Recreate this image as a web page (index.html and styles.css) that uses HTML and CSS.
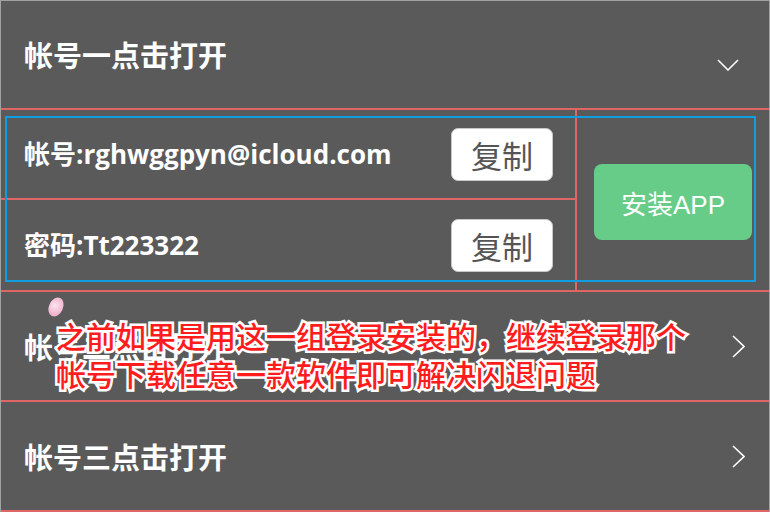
FILE: index.html
```html
<!DOCTYPE html>
<html lang="zh-CN">
<head>
<meta charset="utf-8">
<title>帐号</title>
<link rel="stylesheet" href="styles.css">
</head>
<body>
<div class="app">
  <div class="item item-open">
    <span class="item-title">帐号一点击打开</span>
    <svg class="chev-down" width="22" height="12" viewBox="0 0 22 12"><polyline points="1,1 11,11 21,1" fill="none" stroke="#fff" stroke-width="1.6"/></svg>
  </div>
  <div class="panel">
    <div class="panel-left">
      <div class="cred">
        <span class="cred-text">帐号:rghwggpyn@icloud.com</span>
        <button class="copy-btn">复制</button>
      </div>
      <div class="cred cred-last">
        <span class="cred-text">密码:Tt223322</span>
        <button class="copy-btn">复制</button>
      </div>
    </div>
    <div class="panel-right">
      <button class="install-btn">安装APP</button>
    </div>
    <div class="focus-box"></div>
  </div>
  <div class="item">
    <span class="item-title">帐号二点击打开</span>
    <svg class="chev-right" width="13" height="23" viewBox="0 0 13 23"><polyline points="1,1 12,11.5 1,22" fill="none" stroke="#fff" stroke-width="1.6"/></svg>
  </div>
  <div class="item">
    <span class="item-title">帐号三点击打开</span>
    <svg class="chev-right" width="13" height="23" viewBox="0 0 13 23"><polyline points="1,1 12,11.5 1,22" fill="none" stroke="#fff" stroke-width="1.6"/></svg>
  </div>
  <div class="note">之前如果是用这一组登录安装的，继续登录那个<br>帐号下载任意一款软件即可解决闪退问题</div>
  <div class="blob"></div>
</div>
</body>
</html>
```
FILE: styles.css
```css
* { box-sizing: border-box; }
html, body { margin: 0; padding: 0; background: #5a5a5a; }
.app {
  position: relative;
  width: 770px;
  height: 512px;
  background: #5a5a5a;
  border: 1px solid #a2a2a2;
  border-bottom: none;
  font-family: "Noto Sans CJK SC", sans-serif;
  color: #fff;
  overflow: hidden;
}
.item {
  height: 110px;
  border-bottom: 2px solid #e06666;
  display: flex;
  align-items: center;
  justify-content: space-between;
  padding: 0 24px 0 23px;
}
.item-open { height: 109px; }
.item-title {
  font-size: 29px;
  font-weight: 700;
  line-height: 1;
}
.chev-down { margin-top: 20px; margin-right: 6px; }
.panel {
  position: relative;
  height: 182px;
  border-bottom: 2px solid #e06666;
  display: flex;
}
.panel-left {
  width: 576px;
  border-right: 2px solid #e06666;
  display: flex;
  flex-direction: column;
}
.cred {
  height: 90px;
  border-bottom: 2px solid #e06666;
  display: flex;
  align-items: center;
  justify-content: space-between;
  padding: 0 22px 0 23px;
}
.cred-last { border-bottom: none; }
.cred-text {
  font-family: "Open Sans", "Noto Sans CJK SC", sans-serif;
  font-weight: 700;
  font-size: 26px;
  line-height: 1;
}
.copy-btn {
  width: 102px;
  height: 53px;
  background: #fff;
  border: 1px solid #c8c8c8;
  border-radius: 7px;
  color: #555;
  font-family: "Noto Sans CJK SC", sans-serif;
  font-size: 31px;
  line-height: 1;
  padding: 0;
}
.panel-right {
  flex: 1;
  display: flex;
  align-items: center;
  justify-content: center;
  padding-top: 4px;
}
.install-btn {
  width: 158px;
  height: 76px;
  background: #66cc88;
  border: none;
  border-radius: 8px;
  color: #fff;
  font-family: "Liberation Sans", "Noto Sans CJK SC", sans-serif;
  font-size: 26px;
  padding: 0;
}
.focus-box {
  position: absolute;
  left: 4px;
  top: 6px;
  width: 751px;
  height: 166px;
  border: 2px solid #0f9ee2;
  pointer-events: none;
}
.note {
  position: absolute;
  left: 55px;
  top: 315px;
  font-family: "Noto Sans CJK SC", sans-serif;
  font-weight: 500;
  font-size: 30px;
  line-height: 38px;
  color: #ff1c1c;
  -webkit-text-stroke: 5px #fff;
  paint-order: stroke fill;
  white-space: nowrap;
}
.blob {
  position: absolute;
  left: 48px;
  top: 296px;
  width: 14px;
  height: 20px;
  border-radius: 50%;
  transform: rotate(25deg);
  background: radial-gradient(circle at 40% 45%, #fbe4ee 0%, #f2b8cf 60%, #e9a3c0 100%);
}
```
